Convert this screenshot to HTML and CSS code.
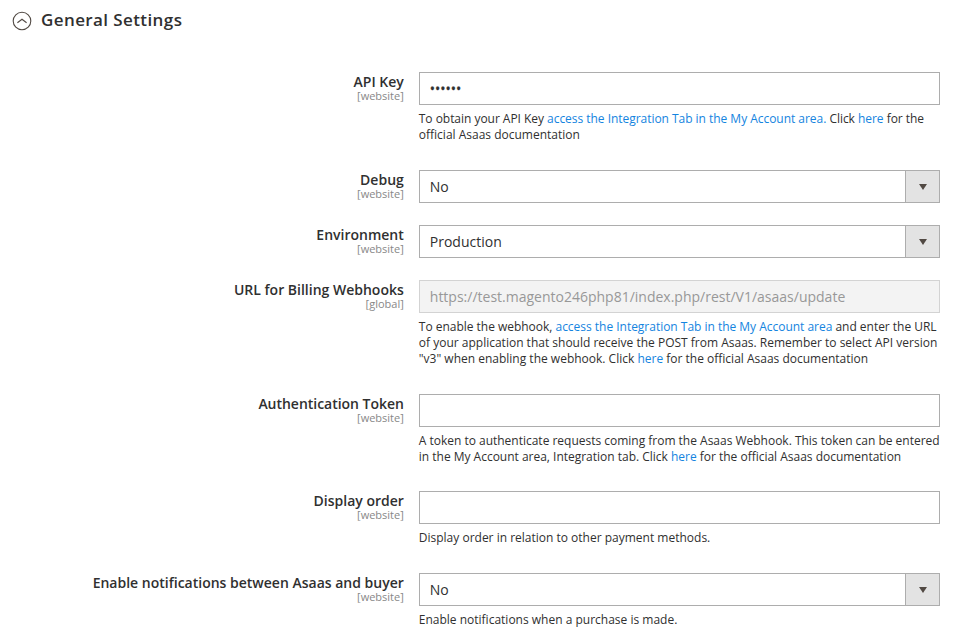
FILE: index.html
```html
<!DOCTYPE html>
<html lang="en">
<head>
<meta charset="utf-8">
<title>General Settings</title>
<link rel="stylesheet" href="styles.css">
</head>
<body>
<header class="section-head">
  <svg class="toggle" width="20" height="20" viewBox="0 0 20 20"><circle cx="10" cy="10" r="8.8"/><path d="M5.4 11.700 10 8.200l4.600 3.500"/></svg>
  <h1>General Settings</h1>
</header>
<main class="settings">
  <div class="row row-key">
    <div class="label"><b>API Key</b><small>[website]</small></div>
    <div class="value"><div class="field dots">••••••</div>
      <p>To obtain your API Key <a>access the Integration Tab in the My Account area.</a> Click <a>here</a> for the<br>official Asaas documentation</p></div>
  </div>
  <div class="row row-debug">
    <div class="label"><b>Debug</b><small>[website]</small></div>
    <div class="value"><div class="field select">No<span class="arrow"></span></div></div>
  </div>
  <div class="row row-env">
    <div class="label"><b>Environment</b><small>[website]</small></div>
    <div class="value"><div class="field select">Production<span class="arrow"></span></div></div>
  </div>
  <div class="row row-url">
    <div class="label"><b>URL for Billing Webhooks</b><small>[global]</small></div>
    <div class="value"><div class="field disabled">https://test.magento246php81/index.php/rest/V1/asaas/update</div>
      <p>To enable the webhook, <a>access the Integration Tab in the My Account area</a> and enter the URL<br>of your application that should receive the POST from Asaas. Remember to select API version<br>"v3" when enabling the webhook. Click <a>here</a> for the official Asaas documentation</p></div>
  </div>
  <div class="row row-token">
    <div class="label"><b>Authentication Token</b><small>[website]</small></div>
    <div class="value"><div class="field"></div>
      <p>A token to authenticate requests coming from the Asaas Webhook. This token can be entered<br>in the My Account area, Integration tab. Click <a>here</a> for the official Asaas documentation</p></div>
  </div>
  <div class="row row-order">
    <div class="label"><b>Display order</b><small>[website]</small></div>
    <div class="value"><div class="field"></div>
      <p>Display order in relation to other payment methods.</p></div>
  </div>
  <div class="row">
    <div class="label"><b>Enable notifications between Asaas and buyer</b><small>[website]</small></div>
    <div class="value"><div class="field select">No<span class="arrow"></span></div>
      <p>Enable notifications when a purchase is made.</p></div>
  </div>
</main>
</body>
</html>
```
FILE: styles.css
```css
* { box-sizing: border-box; }
body {
  margin: 0;
  height: 636px;
  overflow: hidden;
  background: #fff;
  color: #303030;
  font-family: "Open Sans", sans-serif;
  font-size: 14px;
}
.section-head { display: flex; align-items: center; height: 40px; padding-left: 12px; margin-bottom: 32px; }
.toggle { margin-right: 9px; margin-top: 2px; fill: none; stroke: #514943; stroke-width: 1.1; }
h1 { margin: 0; font-size: 17px; font-weight: 600; line-height: 20px; letter-spacing: .4px; }
.row { display: grid; grid-template-columns: 403.8px 521px; column-gap: 15px; align-items: start; }
.row-key { height: 98px; }
.row-debug, .row-env { height: 55px; }
.row-url { height: 114px; }
.row-token { height: 97px; }
.row-order { height: 82px; }
.label { display: flex; flex-direction: column; text-align: right; white-space: nowrap; }
.label b { font-weight: 600; line-height: 19px; }
.row-token b { letter-spacing: -.03px; }
.label small { font-size: 11px; line-height: 9px; color: #888; }
.field {
  display: flex;
  align-items: center;
  height: 33px;
  padding: 0 0 0 10px;
  border: 1px solid #adadad;
  background: #fff;
  white-space: nowrap;
}
.select { justify-content: space-between; }
.dots { -webkit-text-stroke: .3px #303030; }
.arrow { display: flex; align-items: center; justify-content: center; width: 34px; height: 31px; background: #e3e3e3; border-left: 1px solid #adadad; }
.arrow::after { content: ""; margin: 1px 0 0 1px; border: 4px solid transparent; border-top: 6px solid #514943; border-bottom: 0; }
.disabled { background: #f3f3f3; border-color: #d3d3d3; color: #989898; }
p { margin: 6px 0 0; font-size: 12px; line-height: 16px; white-space: nowrap; }
.row-key p::first-line { letter-spacing: -.035px; }
.row-url p::first-line { letter-spacing: -.02px; }
.row-token p { letter-spacing: -.012px; }
a { color: #1484e0; }
```
